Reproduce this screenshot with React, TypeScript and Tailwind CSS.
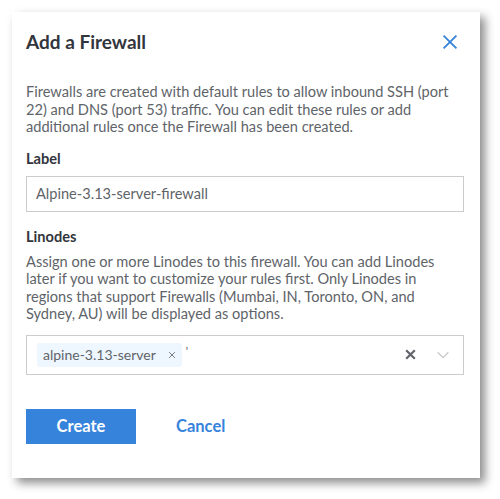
import { FC } from "react";

const CloseIcon: FC<{ className?: string }> = ({ className }) => (
    <svg viewBox="0 0 24 24" className={className} fill="none" stroke="currentColor" strokeWidth="2">
        <path d="M5 5L19 19M19 5L5 19" />
    </svg>
)

const App: FC = () => {
    return (
        <div className="w-[500px] h-[499px] bg-white p-3" style={{ fontFamily: "Lato, 'Open Sans', sans-serif" }}>
            <div className="w-[468px] h-[466px] bg-white shadow-[5px_5px_9px_rgba(0,0,0,0.45)] px-[14px] pt-[19px]">
                <div className="flex items-center justify-between">
                    <h2 className="text-[19px] font-bold text-[#32363c] leading-[22px]">Add a Firewall</h2>
                    <CloseIcon className="w-[22px] h-[22px] text-[#3683dc] mr-[5px]" />
                </div>

                <p className="mt-[30px] text-[14.6px] leading-[17.5px] text-[#606469]">
                    Firewalls are created with default rules to allow inbound SSH (port 22) and DNS (port 53) traffic. You can edit these rules or add additional rules once the Firewall has been created.
                </p>

                <label className="block mt-[14px] text-[14.6px] font-bold text-[#32363c] leading-[18px]">Label</label>
                <div className="mt-[8px] w-[438px] h-[36px] border border-[#ccc] flex items-center px-[9px] text-[14.6px] text-[#606469]">
                    Alpine-3.13-server-firewall
                </div>

                <label className="block mt-[16px] text-[14.6px] font-bold text-[#32363c] leading-[18px]">Linodes</label>
                <p className="mt-[7px] text-[14.6px] leading-[17.5px] text-[#606469]">
                    Assign one or more Linodes to this firewall. You can add Linodes later if you want to customize your rules first. Only Linodes in regions that support Firewalls (Mumbai, IN, Toronto, ON, and Sydney, AU) will be displayed as options.
                </p>

                <div className="mt-[12px] w-[438px] h-[40px] border border-[#ccc] flex items-center pl-[10px] pr-[12px]">
                    <div className="flex items-center h-[24px] bg-[#eef6ff] rounded-[3px] pl-[6px] pr-[5px] gap-[11px] text-[14px] text-[#606469]">
                        <span>alpine-3.13-server</span>
                        <CloseIcon className="w-[10px] h-[10px] text-[#606469]" />
                    </div>
                    <span className="ml-[4px] -mt-[8px] text-[12px] text-[#606469]">'</span>
                    <div className="ml-auto flex items-center gap-[18px]">
                        <svg viewBox="0 0 24 24" className="w-[13px] h-[13px] text-[#606469]" fill="none" stroke="currentColor" strokeWidth="4">
                            <path d="M4 4L20 20M20 4L4 20" />
                        </svg>
                        <svg viewBox="0 0 24 24" className="w-[16px] h-[16px] text-[#c9cacb]" fill="none" stroke="currentColor" strokeWidth="2">
                            <path d="M4 8l8 8 8-8" />
                        </svg>
                    </div>
                </div>

                <div className="mt-[34px] flex items-center gap-[40px]">
                    <button className="w-[110px] h-[35px] bg-[#3683dc] text-white font-bold text-[16.5px]">Create</button>
                    <button className="text-[#3683dc] font-bold text-[16.5px]">Cancel</button>
                </div>
            </div>
        </div>
    )
}

export default App;
